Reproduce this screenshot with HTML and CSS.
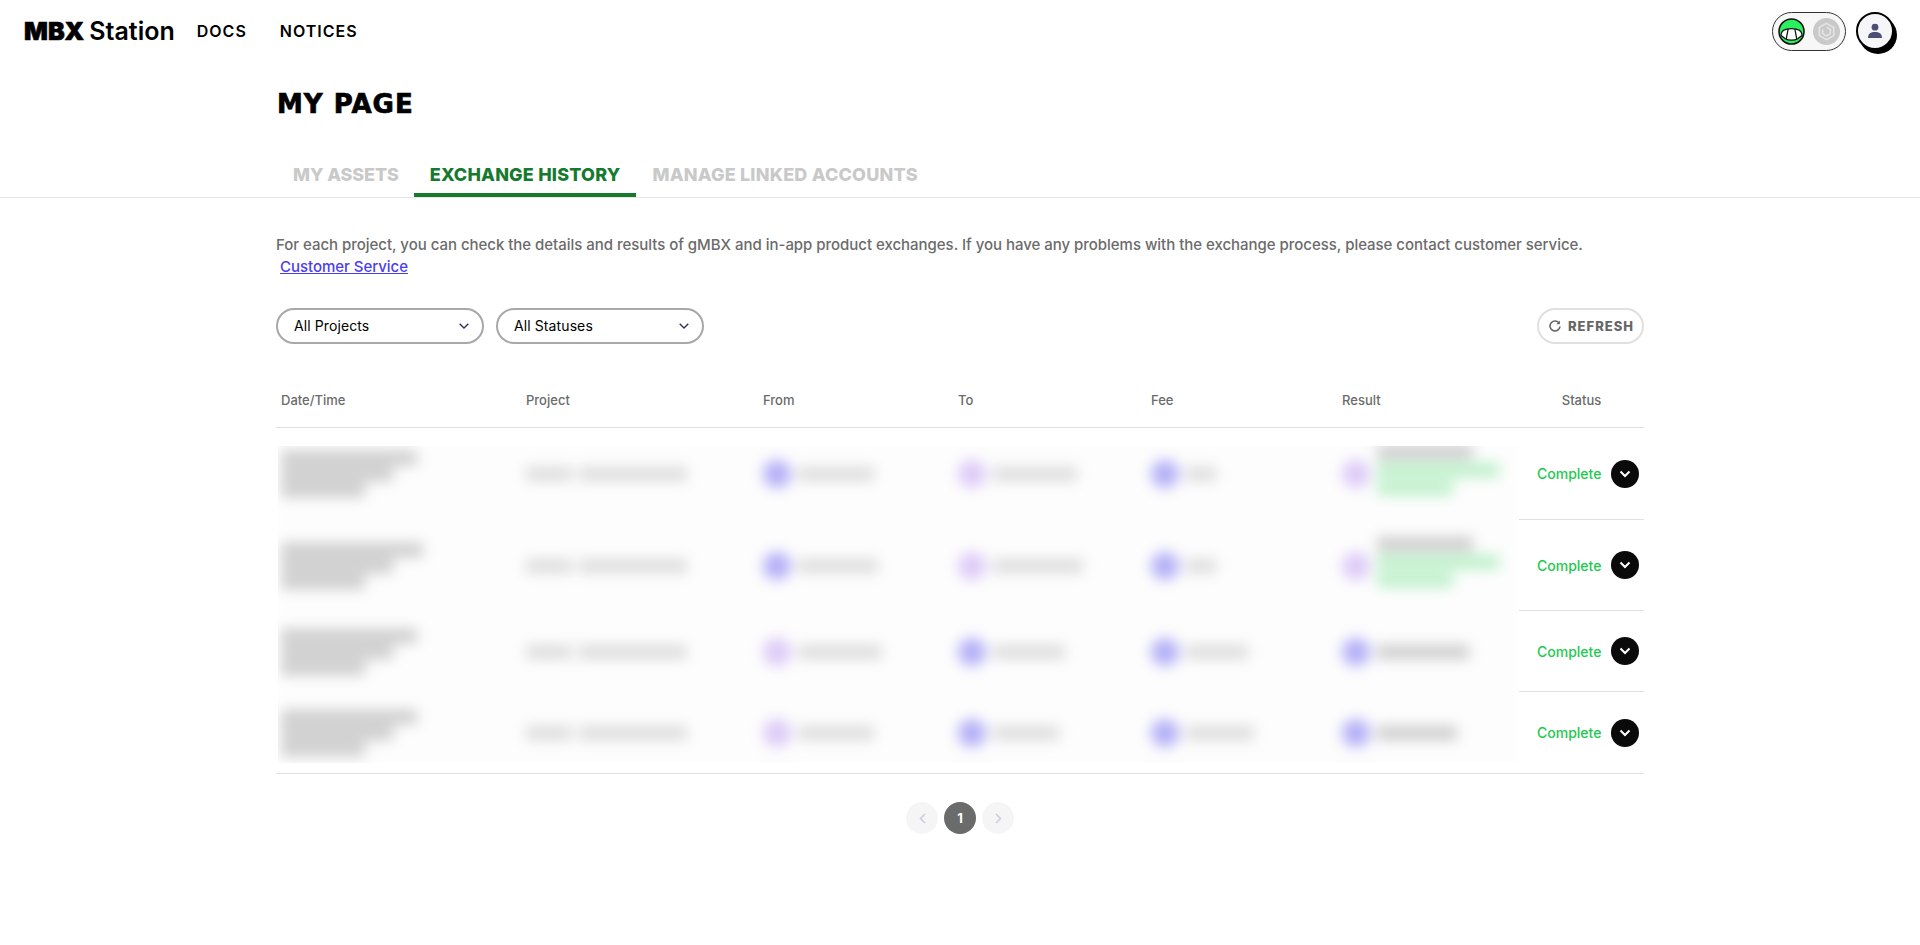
FILE: index.html
```html
<!DOCTYPE html>
<html lang="en">
<head>
    <meta charset="UTF-8">
    <meta name="viewport" content="width=device-width, initial-scale=1.0">
    <title>MBX Station - My Page</title>
    <link rel="stylesheet" href="styles.css">
</head>
<body>
    <header class="topbar">
        <div class="topbar-left">
            <a class="logo" href="#"><span class="logo-mbx">MBX</span> <span class="logo-station">Station</span></a>
            <a class="nav-link" href="#">DOCS</a>
            <a class="nav-link" href="#">NOTICES</a>
        </div>
        <div class="topbar-right">
            <div class="wallet-toggle">
                <svg class="wallet-icon" viewBox="0 0 28 28">
                    <circle cx="14" cy="14" r="13" fill="#2bef5e" stroke="#111" stroke-width="1.6"/>
                    <path d="M3 18 C3 13 8 11 14 11 C20 11 25 13 25 18 L20.5 21.5 C17 23.5 11 23.5 7.5 21.5 Z" fill="#fff" stroke="#111" stroke-width="1.3"/>
                    <path d="M10.5 11.5 L8.5 22 M17.5 11.5 L19.5 22" fill="none" stroke="#111" stroke-width="1.3"/>
                </svg>
                <svg class="wallet-icon" viewBox="0 0 28 28">
                    <circle cx="14" cy="14" r="14" fill="#c9c9c9"/>
                    <path d="M14 5.5 L21.5 9.8 V18.2 L14 22.5 L6.5 18.2 V9.8 Z" fill="none" stroke="#e6e6e6" stroke-width="1.6"/>
                    <path d="M14 9.5 L18 11.8 V16.2 L14 18.5 L10 16.2 V11.8" fill="none" stroke="#e6e6e6" stroke-width="1.6"/>
                </svg>
            </div>
            <div class="user-button">
                <svg viewBox="0 0 16 16" width="16" height="16">
                    <circle cx="8" cy="4.2" r="3.4" fill="#4b4f73"/>
                    <path d="M1 15 C1 10.5 4 9 8 9 C12 9 15 10.5 15 15 Z" fill="#4b4f73"/>
                </svg>
            </div>
        </div>
    </header>

    <h1 class="page-title">MY PAGE</h1>

    <nav class="tabs">
        <a class="tab" href="#">MY ASSETS</a>
        <a class="tab active" href="#">EXCHANGE HISTORY</a>
        <a class="tab" href="#">MANAGE LINKED ACCOUNTS</a>
    </nav>

    <main class="content">
        <p class="intro">For each project, you can check the details and results of gMBX and in-app product exchanges. If you have any problems with the exchange process, please contact customer service.<br><a class="intro-link" href="#">Customer Service</a></p>

        <div class="filters">
            <div class="dropdown">
                <span>All Projects</span>
                <svg class="dropdown-arrow" viewBox="0 0 10 6" width="10" height="6"><path d="M0.7 0.7 L5 5 L9.3 0.7" fill="none" stroke="#2d2f55" stroke-width="1.3"/></svg>
            </div>
            <div class="dropdown">
                <span>All Statuses</span>
                <svg class="dropdown-arrow" viewBox="0 0 10 6" width="10" height="6"><path d="M0.7 0.7 L5 5 L9.3 0.7" fill="none" stroke="#2d2f55" stroke-width="1.3"/></svg>
            </div>
            <button class="refresh">
                <svg viewBox="0 0 12 12" width="12" height="12"><path d="M10.3 3.4 A5 5 0 1 0 11 6.5" fill="none" stroke="#666" stroke-width="1.6"/><path d="M10.9 0.6 V4.2 H7.3 Z" fill="#666"/></svg>
                REFRESH
            </button>
        </div>

        <div class="table-head">
            <div>Date/Time</div>
            <div>Project</div>
            <div>From</div>
            <div>To</div>
            <div>Fee</div>
            <div>Result</div>
            <div class="head-status">Status</div>
        </div>

        <div class="table-body">
            <!-- account details are blurred out in the capture, so they are only bars here -->
            <div class="blur-panel">
                <div class="blur-row tall">
                    <div class="stack"><i class="bar dark" style="width:136px"></i><i class="bar dark" style="width:112px"></i><i class="bar dark" style="width:84px"></i></div>
                    <div class="pair"><i class="bar" style="width:46px"></i><i class="bar" style="width:108px"></i></div>
                    <div class="pair"><i class="token blue"></i><i class="bar" style="width:76px"></i></div>
                    <div class="pair"><i class="token purple"></i><i class="bar" style="width:84px"></i></div>
                    <div class="pair"><i class="token blue"></i><i class="bar" style="width:30px"></i></div>
                    <div class="pair"><i class="token purple"></i>
                        <div class="stack result-stack"><i class="bar dark" style="width:96px"></i><i class="bar green" style="width:122px"></i><i class="bar green" style="width:76px"></i></div>
                    </div>
                </div>
                <div class="blur-row mid">
                    <div class="stack"><i class="bar dark" style="width:142px"></i><i class="bar dark" style="width:112px"></i><i class="bar dark" style="width:84px"></i></div>
                    <div class="pair"><i class="bar" style="width:46px"></i><i class="bar" style="width:108px"></i></div>
                    <div class="pair"><i class="token blue"></i><i class="bar" style="width:80px"></i></div>
                    <div class="pair"><i class="token purple"></i><i class="bar" style="width:90px"></i></div>
                    <div class="pair"><i class="token blue"></i><i class="bar" style="width:30px"></i></div>
                    <div class="pair"><i class="token purple"></i>
                        <div class="stack result-stack"><i class="bar dark" style="width:96px"></i><i class="bar green" style="width:122px"></i><i class="bar green" style="width:76px"></i></div>
                    </div>
                </div>
                <div class="blur-row short">
                    <div class="stack"><i class="bar dark" style="width:136px"></i><i class="bar dark" style="width:112px"></i><i class="bar dark" style="width:84px"></i></div>
                    <div class="pair"><i class="bar" style="width:46px"></i><i class="bar" style="width:108px"></i></div>
                    <div class="pair"><i class="token purple"></i><i class="bar" style="width:84px"></i></div>
                    <div class="pair"><i class="token blue"></i><i class="bar" style="width:72px"></i></div>
                    <div class="pair"><i class="token blue"></i><i class="bar" style="width:62px"></i></div>
                    <div class="pair"><i class="token blue"></i><i class="bar dark" style="width:92px"></i></div>
                </div>
                <div class="blur-row short">
                    <div class="stack"><i class="bar dark" style="width:136px"></i><i class="bar dark" style="width:112px"></i><i class="bar dark" style="width:84px"></i></div>
                    <div class="pair"><i class="bar" style="width:46px"></i><i class="bar" style="width:108px"></i></div>
                    <div class="pair"><i class="token purple"></i><i class="bar" style="width:76px"></i></div>
                    <div class="pair"><i class="token blue"></i><i class="bar" style="width:66px"></i></div>
                    <div class="pair"><i class="token blue"></i><i class="bar" style="width:68px"></i></div>
                    <div class="pair"><i class="token blue"></i><i class="bar dark" style="width:80px"></i></div>
                </div>
            </div>

            <div class="status-col">
                <div class="status-cell tall"><span class="status-text">Complete</span><button class="expand"><svg viewBox="0 0 12 8" width="12" height="8"><path d="M1.5 1.5 L6 6 L10.5 1.5" fill="none" stroke="#fff" stroke-width="2"/></svg></button></div>
                <div class="status-cell mid"><span class="status-text">Complete</span><button class="expand"><svg viewBox="0 0 12 8" width="12" height="8"><path d="M1.5 1.5 L6 6 L10.5 1.5" fill="none" stroke="#fff" stroke-width="2"/></svg></button></div>
                <div class="status-cell short"><span class="status-text">Complete</span><button class="expand"><svg viewBox="0 0 12 8" width="12" height="8"><path d="M1.5 1.5 L6 6 L10.5 1.5" fill="none" stroke="#fff" stroke-width="2"/></svg></button></div>
                <div class="status-cell short last"><span class="status-text">Complete</span><button class="expand"><svg viewBox="0 0 12 8" width="12" height="8"><path d="M1.5 1.5 L6 6 L10.5 1.5" fill="none" stroke="#fff" stroke-width="2"/></svg></button></div>
            </div>
        </div>

        <div class="pagination">
            <span class="page-btn"><svg viewBox="0 0 7 11" width="7" height="11"><path d="M6 1 L1.5 5.5 L6 10" fill="none" stroke="#cfcae6" stroke-width="1.6"/></svg></span>
            <span class="page-btn current">1</span>
            <span class="page-btn"><svg viewBox="0 0 7 11" width="7" height="11"><path d="M1 1 L5.5 5.5 L1 10" fill="none" stroke="#cfcae6" stroke-width="1.6"/></svg></span>
        </div>
    </main>
</body>
</html>
```

FILE: styles.css
```css
body {
    margin: 0;
    font-family: Inter, "Liberation Sans", sans-serif;
    background-color: #fff;
    color: #000;
}
a {
    text-decoration: none;
}
button {
    font-family: inherit;
    padding: 0;
    cursor: pointer;
}

/* top bar */
.topbar {
    display: flex;
    justify-content: space-between;
    align-items: center;
    height: 62px;
    padding: 0 26px 0 24px;
}
.topbar-left {
    display: flex;
    align-items: center;
}
.logo {
    color: #000;
    font-size: 25px;
    margin-right: 22px;
    white-space: nowrap;
}
.logo-mbx {
    font-weight: 900;
    -webkit-text-stroke: 0.6px #000;
}
.logo-station {
    font-weight: 600;
    margin-left: -2px;
}
.nav-link {
    color: #000;
    font-size: 16px;
    font-weight: 600;
    letter-spacing: 1px;
    margin-right: 33px;
}
.topbar-right {
    display: flex;
    align-items: center;
    gap: 10px;
}
.wallet-toggle {
    display: flex;
    align-items: center;
    gap: 8px;
    height: 37px;
    padding: 0 5px;
    border: 1.5px solid #333;
    border-radius: 20px;
    background-color: #f7f7f7;
}
.wallet-icon {
    width: 27px;
    height: 27px;
}
.user-button {
    display: flex;
    justify-content: center;
    align-items: center;
    width: 34px;
    height: 34px;
    border: 2px solid #000;
    border-radius: 50%;
    background-color: #f6f6f8;
    box-shadow: 3px 4px 0 #000;
}

/* title and tabs */
.page-title {
    margin: 27px 0 0 277px;
    font-family: "DejaVu Sans", sans-serif;
    font-size: 26px;
    line-height: 30px;
    font-weight: 700;
    letter-spacing: 1px;
    -webkit-text-stroke: 0.7px #000;
}
.tabs {
    display: flex;
    margin-top: 31px;
    padding-left: 276px;
    height: 47px;
    border-bottom: 1px solid #e6e6e6;
}
.tab {
    padding: 0 16px;
    height: 47px;
    line-height: 49px;
    font-size: 18px;
    font-weight: 800;
    letter-spacing: 0.2px;
    color: #c9c9c9;
    box-sizing: border-box;
}
.tab:first-child {
    padding: 0 15px 0 17px;
    letter-spacing: -0.1px;
}
.tab.active {
    color: #167a2e;
    border-bottom: 4px solid #167a2e;
}

/* content */
.content {
    width: 1368px;
    margin-left: 276px;
}
.intro {
    margin: 36px 0 0;
    font-size: 15px;
    font-weight: 500;
    letter-spacing: -0.03px;
    line-height: 22px;
    color: #6b6b6b;
}
.intro-link {
    margin-left: 4px;
    color: #4a3df0;
    text-decoration: underline;
}
.filters {
    display: flex;
    align-items: center;
    gap: 12px;
    margin-top: 30px;
}
.dropdown {
    display: flex;
    justify-content: space-between;
    align-items: center;
    width: 208px;
    height: 36px;
    padding: 0 13px 1px 16px;
    border: 2px solid #a8a8a8;
    border-radius: 18px;
    font-size: 14px;
    letter-spacing: 0.1px;
    box-sizing: border-box;
}
.refresh {
    display: flex;
    align-items: center;
    gap: 7px;
    margin-left: auto;
    height: 36px;
    padding: 0 8px 0 10px;
    border: 2px solid #e0e0e0;
    border-radius: 18px;
    background-color: #fff;
    color: #666;
    font-size: 13px;
    font-weight: 800;
    letter-spacing: 1px;
}

/* table */
.table-head {
    display: grid;
    grid-template-columns: 245px 237px 195px 193px 191px 182px 125px;
    align-items: end;
    height: 84px;
    padding-bottom: 19px;
    box-sizing: border-box;
    border-bottom: 1px solid #e0e0e0;
    font-size: 13px;
    font-weight: 500;
    color: #6b6b6b;
}
.table-head > div {
    padding-left: 5px;
}
.table-head .head-status {
    padding-left: 0;
    text-align: center;
}
.table-body {
    display: flex;
    border-bottom: 1px solid #e0e0e0;
}
.blur-panel {
    width: 1243px;
    background-color: #fdfdfd;
    filter: blur(7px);
    clip-path: inset(18px 0 10px 2px);
}
.blur-row {
    display: grid;
    grid-template-columns: 245px 237px 195px 193px 191px 182px;
    align-items: center;
}
.blur-row > div {
    margin-left: 5px;
}
.tall {
    height: 92px;
}
.mid {
    height: 91px;
}
.short {
    height: 81px;
}
.stack {
    display: flex;
    flex-direction: column;
    gap: 2px;
}
.pair {
    display: flex;
    align-items: center;
    gap: 7px;
}
.result-stack {
    margin-bottom: 8px;
    gap: 4px;
}
.bar {
    display: block;
    height: 14px;
    background-color: #dcdcdc;
}
.bar.dark {
    background-color: #cccccc;
}
.bar.green {
    background-color: #bbf0c8;
}
.token {
    display: block;
    flex-shrink: 0;
    width: 28px;
    height: 28px;
    border-radius: 50%;
}
.token.blue {
    background-color: #b4aff7;
}
.token.purple {
    background-color: #ddcbf7;
}
.status-col {
    width: 125px;
}
.status-cell {
    display: flex;
    align-items: center;
    gap: 10px;
    padding-left: 18px;
    border-bottom: 1px solid #e0e0e0;
    box-sizing: border-box;
}
.status-cell.last {
    border-bottom: none;
}
.status-text {
    width: 64px;
    font-size: 14px;
    font-weight: 500;
    color: #22c94f;
    white-space: nowrap;
}
.expand {
    display: flex;
    justify-content: center;
    align-items: center;
    width: 28px;
    height: 28px;
    border: none;
    border-radius: 50%;
    background-color: #0a0a0a;
}

/* pagination */
.pagination {
    display: flex;
    justify-content: center;
    gap: 6px;
    margin-top: 28px;
}
.page-btn {
    display: flex;
    justify-content: center;
    align-items: center;
    width: 32px;
    height: 32px;
    border-radius: 50%;
    background-color: #f5f5f6;
}
.page-btn.current {
    background-color: #6b6b6b;
    color: #fff;
    font-size: 13px;
    font-weight: 700;
}
```
